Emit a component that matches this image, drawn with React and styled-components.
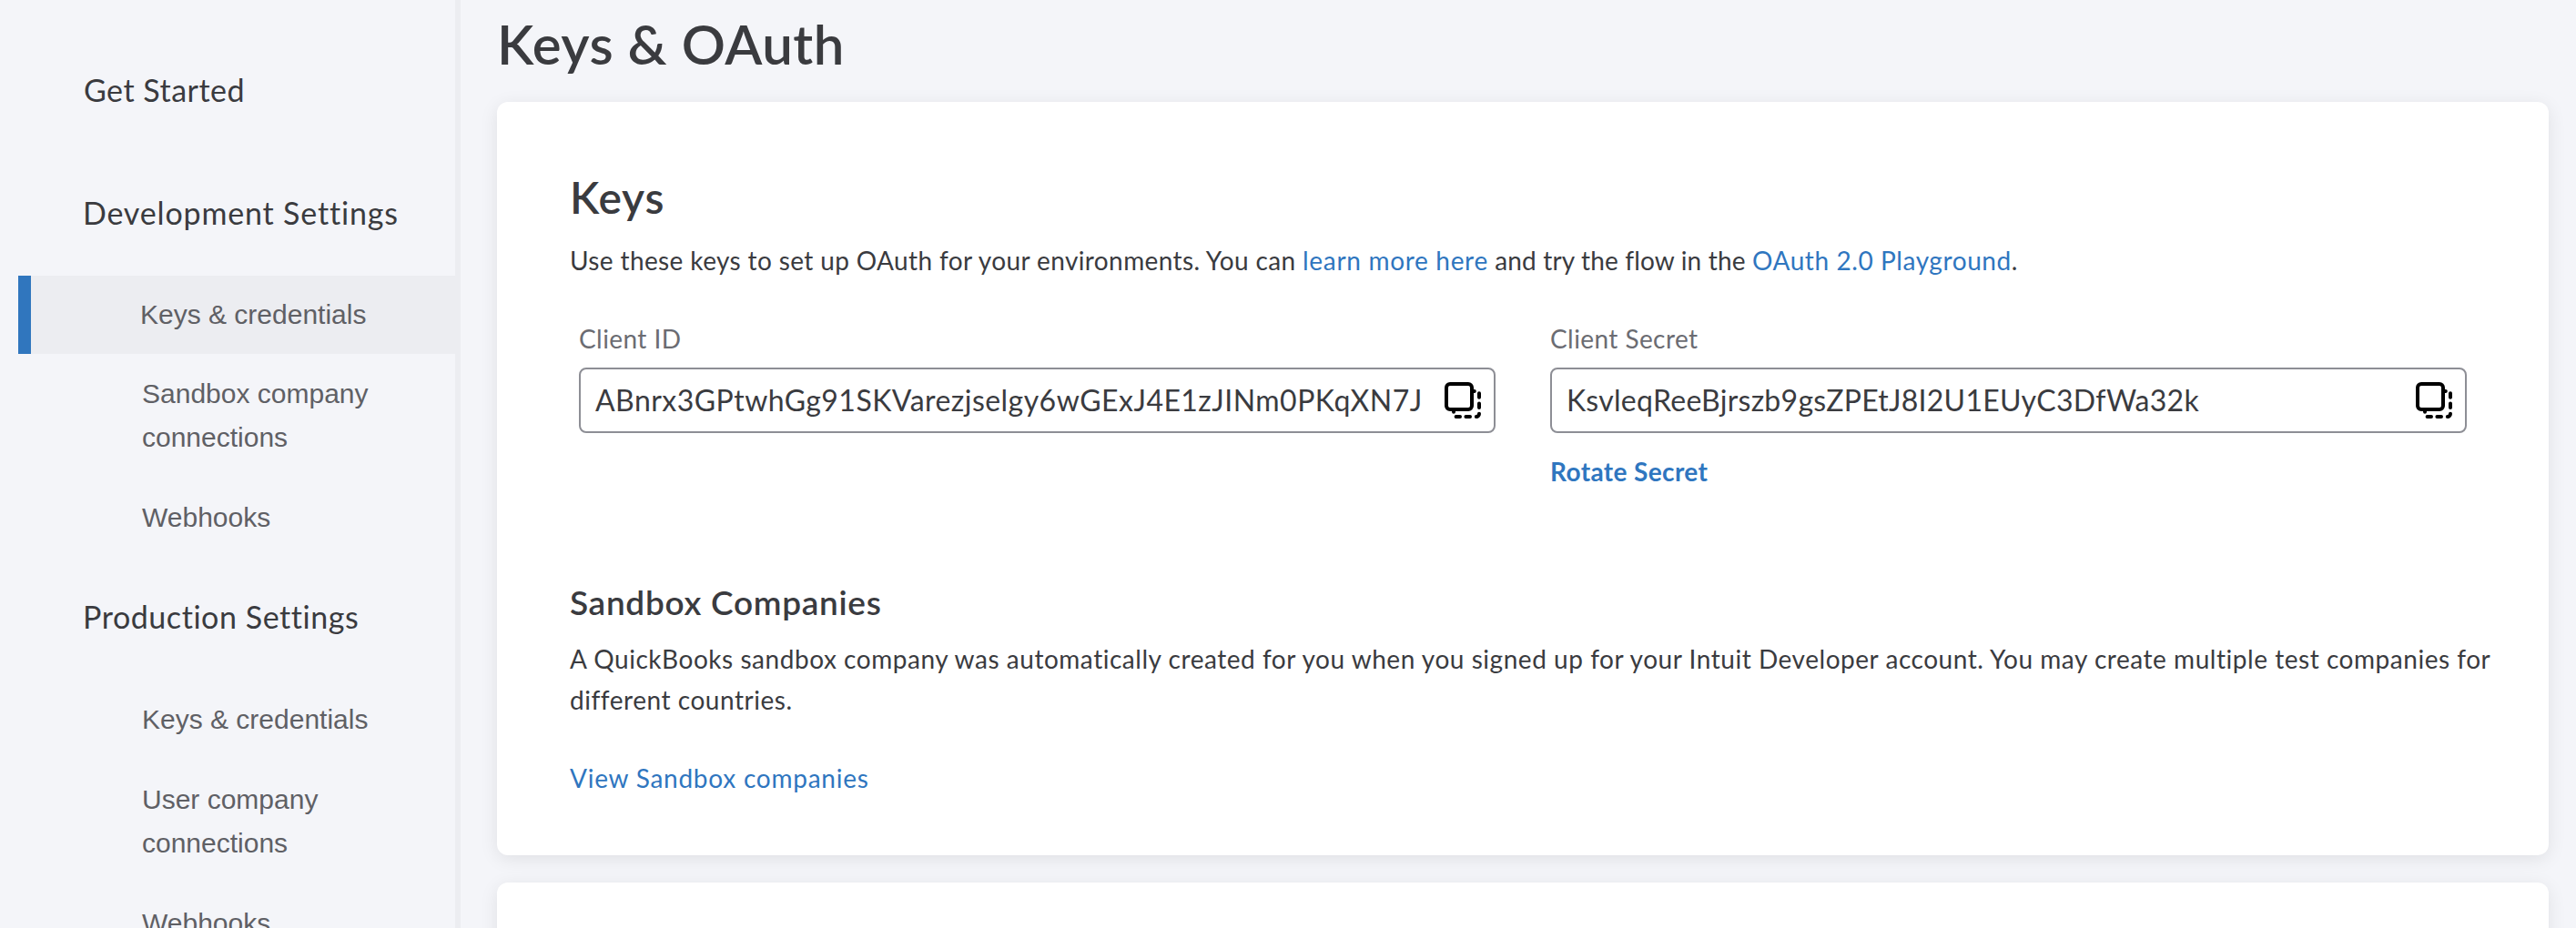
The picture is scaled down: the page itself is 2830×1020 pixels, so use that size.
import React from 'react';
import styled, { createGlobalStyle } from 'styled-components';

const GlobalStyle = createGlobalStyle`
  *, *::before, *::after { box-sizing: border-box; }
  html, body { margin: 0; height: 1020px; overflow: hidden; }
  body {
    background: #f4f5f9;
    color: #3a3b3f;
    font-family: Lato, "Open Sans", sans-serif;
    -webkit-font-smoothing: antialiased;
  }
  h1, h2, h3, p, ul { margin: 0; padding: 0; font-weight: 400; }
  a { color: #2f76bf; text-decoration: none; }
`;

const Page = styled.div`
  display: flex;
  height: 1020px;
  overflow: hidden;
`;

const Sidebar = styled.nav`
  flex: 0 0 506px;
  padding-top: 78px;
  border-right: 6px solid #ecedf1;
`;

const SectionTitle = styled.div`
  margin-top: ${(p) => p.$gap || 0}px;
  padding-left: ${(p) => p.$indent || 91}px;
  font-size: 34px;
  line-height: 42px;
  letter-spacing: ${(p) => p.$tracking}px;
`;

const NavList = styled.ul`
  margin-top: 48px;
  list-style: none;
`;

const NavItem = styled.li`
  margin-left: ${(p) => (p.$active ? 20 : 0)}px;
  padding: ${(p) => (p.$active ? '19px 60px 19px 120px' : '20px 60px 20px 156px')};
  border-left: ${(p) => (p.$active ? '14px solid #3076be' : '0')};
  background: ${(p) => (p.$active ? '#ecedf1' : 'transparent')};
  color: #5f6065;
  font-family: "Liberation Sans", Arial, sans-serif;
  font-size: 30px;
  line-height: 48px;
`;

const Main = styled.main`
  flex: 1;
  display: flex;
  flex-direction: column;
  padding: 12px 30px 0 40px;
`;

const PageTitle = styled.h1`
  margin-bottom: 28px;
  font-size: 60px;
  font-weight: 600;
  line-height: 72px;
  letter-spacing: 0.5px;
`;

const Card = styled.section`
  flex: none;
  min-height: 200px;
  margin-bottom: 30px;
  padding: 76px 56px 68px 80px;
  border-radius: 12px;
  background: #fff;
  box-shadow: 0 4px 20px rgba(0, 0, 0, 0.085);
`;

const CardTitle = styled.h2`
  font-size: 48px;
  font-weight: 600;
  line-height: 58px;
  letter-spacing: 0.8px;
`;

const SubTitle = styled.h3`
  margin-top: 105px;
  font-size: 37px;
  font-weight: 600;
  line-height: 44px;
  letter-spacing: 0.7px;
`;

const Text = styled.p`
  margin-top: 18px;
  font-size: 28px;
  line-height: 45px;
  letter-spacing: ${(p) => p.$tracking}px;
`;

const Link = styled.a`
  letter-spacing: ${(p) => p.$tracking}px;
`;

const Tracked = styled.span`
  letter-spacing: ${(p) => p.$tracking}px;
`;

const BlockLink = styled.a`
  display: block;
  margin-top: ${(p) => p.$gap}px;
  font-size: 28px;
  font-weight: ${(p) => (p.$bold ? 700 : 400)};
  line-height: 34px;
  letter-spacing: ${(p) => p.$tracking}px;
`;

const Fields = styled.div`
  display: grid;
  grid-template-columns: 1fr 1fr;
  gap: 60px;
  margin-top: 46px;
  padding: 0 34px 0 10px;
`;

const Field = styled.div`
  min-width: 0;
`;

const Label = styled.div`
  color: #6b6c72;
  font-size: 28px;
  line-height: 34px;
  letter-spacing: 0.42px;
`;

const ValueBox = styled.div`
  display: flex;
  align-items: center;
  justify-content: space-between;
  height: 72px;
  margin-top: 15px;
  padding: 0 14px 0 16px;
  border: 2px solid #8d8e95;
  border-radius: 8px;
`;

const Value = styled.span`
  font-size: 32px;
  line-height: 40px;
  white-space: nowrap;
  letter-spacing: ${(p) => p.$tracking}px;
`;

const CopyGlyph = styled.svg`
  flex: none;
  width: 40px;
  height: 40px;
  fill: none;
  stroke: #000;
  stroke-width: 4;
  stroke-linecap: round;
`;

function CopyIcon() {
  return (
    <CopyGlyph viewBox="0 0 40 40">
      <rect x="2" y="2" width="28" height="28" rx="4" />
      <path d="M32 10h.8M38 12.2v4.6M38 23.4v4.6M38 34.8a3.2 3.2 0 0 1-3.2 3.2M28 38h-4.6M17 38h-4.4M10 32v.8" />
    </CopyGlyph>
  );
}

function KeyField({ label, value, tracking, children }) {
  return (
    <Field>
      <Label>{label}</Label>
      <ValueBox>
        <Value $tracking={tracking}>{value}</Value>
        <CopyIcon />
      </ValueBox>
      {children}
    </Field>
  );
}

export default function App() {
  return (
    <>
      <GlobalStyle />
      <Page>
        <Sidebar>
          <SectionTitle $tracking={0.49} $indent={92}>Get Started</SectionTitle>
          <SectionTitle $gap={93} $tracking={0.83}>Development Settings</SectionTitle>
          <NavList>
            <NavItem $active>Keys &amp; credentials</NavItem>
            <NavItem>Sandbox company connections</NavItem>
            <NavItem>Webhooks</NavItem>
          </NavList>
          <SectionTitle $gap={44} $tracking={0.56}>Production Settings</SectionTitle>
          <NavList>
            <NavItem>Keys &amp; credentials</NavItem>
            <NavItem>User company connections</NavItem>
            <NavItem>Webhooks</NavItem>
          </NavList>
        </Sidebar>
        <Main>
          <PageTitle>Keys &amp; OAuth</PageTitle>
          <Card>
            <CardTitle>Keys</CardTitle>
            <Text $tracking={0.38}>
              Use these keys to set up OAuth for your environments. You can{' '}
              <Link $tracking={0.68}>learn more here</Link>
              <Tracked $tracking={0.16}> and try the flow in the </Tracked>
              <Link $tracking={0.58}>OAuth 2.0 Playground</Link>.
            </Text>
            <Fields>
              <KeyField
                label="Client ID"
                value="ABnrx3GPtwhGg91SKVarezjselgy6wGExJ4E1zJINm0PKqXN7J"
                tracking={0.46}
              />
              <KeyField
                label="Client Secret"
                value="KsvleqReeBjrszb9gsZPEtJ8I2U1EUyC3DfWa32k"
                tracking={0.27}
              >
                <BlockLink $gap={25} $bold $tracking={0.38}>Rotate Secret</BlockLink>
              </KeyField>
            </Fields>
            <SubTitle>Sandbox Companies</SubTitle>
            <Text $tracking={0.535}>
              A QuickBooks sandbox company was automatically created for you when you signed up for your
              Intuit Developer account. You may create multiple test companies for different countries.
            </Text>
            <BlockLink $gap={46} $tracking={0.75}>View Sandbox companies</BlockLink>
          </Card>
          <Card />
        </Main>
      </Page>
    </>
  );
}
